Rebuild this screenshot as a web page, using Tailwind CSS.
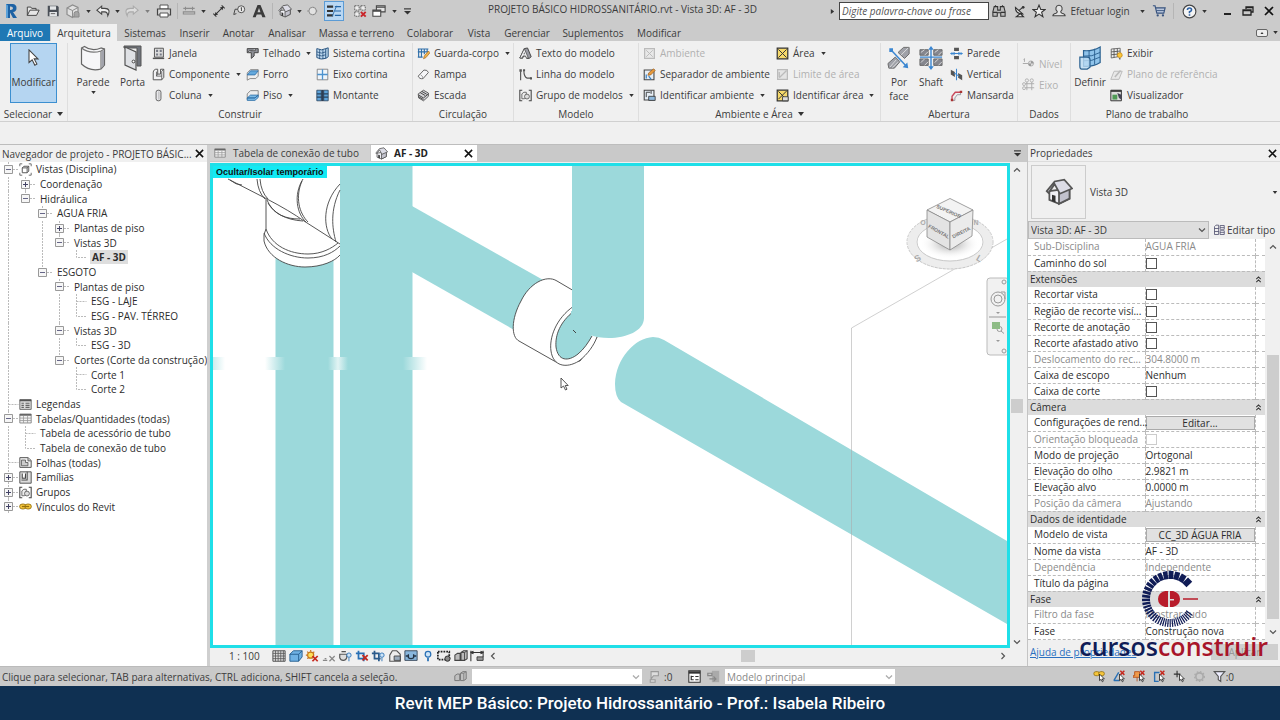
<!DOCTYPE html>
<html lang="pt-BR">
<head>
  <meta charset="utf-8" />
  <title>PROJETO BÁSICO HIDROSSANITÁRIO.rvt - Vista 3D: AF - 3D</title>
  <meta name="viewport" content="width=device-width,initial-scale=1" />
  <script src="https://cdn.jsdelivr.net/npm/@tailwindcss/browser@4"></script>
</head>

<body class="flex h-screen flex-col overflow-hidden bg-[#f0f0f0] font-['Open_Sans',sans-serif] text-[10px] leading-[14px] text-[#3c3c3c]">

<!-- ── ICONS ─────────────────────────────────────── -->
<svg class="hidden">
  <defs>
    <symbol id="i-caret" viewBox="0 0 6 4"><path d="M0 0h6L3 4z" fill="#333"/></symbol>
    <symbol id="i-x" viewBox="0 0 10 10"><path d="M1 1l8 8M9 1l-8 8" stroke="#111" stroke-width="1.700"/></symbol>
    <symbol id="i-chev" viewBox="0 0 8 8"><path d="M1 2.500L4 5.500 7 2.500" fill="none" stroke="#555" stroke-width="1.200"/></symbol>
    <symbol id="i-revit" viewBox="0 0 16 16"><path d="M3 1h6.500q4 .3 4 4T10 9l4 6H10L7 9.500V15H3zM7 3.500V7q3 .2 3-1.800T7 3.500z" fill="#1d62a4" fill-rule="evenodd"/><path d="M3 1l2 1.500V15H3z" fill="#5aa0d8"/></symbol>
    <symbol id="i-open" viewBox="0 0 16 16"><path d="M1.500 13V3.500h4l1 1.500h5v2M1.500 13l3-6h10.500l-3 6z" fill="#e6e6e6" stroke="#444" stroke-width="1.100"/></symbol>
    <symbol id="i-save" viewBox="0 0 16 16"><path d="M2 2h11l1.500 1.500V14H2z" fill="#4a4f57"/><path d="M4.500 2.500h7v4h-7zM4 9h8.500v5H4z" fill="#e4e6e8"/><path d="M5.500 11h5" stroke="#555"/></symbol>
    <symbol id="i-cloudcube" viewBox="0 0 16 16"><path d="M2 5l5.500-3L13 4.500V11l-5.500 3.500L2 11.500z" fill="#e0e0e0" stroke="#8d8d8d" stroke-width="1.200"/><path d="M2 5l5.500 2.500L13 4.500M7.500 7.500v7" stroke="#8d8d8d" fill="none"/><path d="M9 10.500q0-2 2.500-2T14 10.500V14H9z" fill="#a5a5a5" stroke="#888"/></symbol>
    <symbol id="i-undo" viewBox="0 0 16 16"><path d="M6.500 2.500L1 7l5.500 4.500V9H10q3 0 3.500 4.500Q17.500 5 10 5H6.500z" fill="#eee" stroke="#444" stroke-width="1.200"/></symbol>
    <symbol id="i-redo" viewBox="0 0 16 16"><path d="M9.500 2.500L15 7l-5.500 4.500V9H6q-3 0-3.500 4.500Q-1.500 5 6 5h3.500z" fill="#ddd" stroke="#aaa" stroke-width="1.200"/></symbol>
    <symbol id="i-print" viewBox="0 0 16 16"><path d="M4 2h8v4H4z" fill="#fff" stroke="#555"/><path d="M1.500 6h13v6h-13z" fill="#d8d8d8" stroke="#444" stroke-width="1.200"/><path d="M4 10h8v4H4z" fill="#fff" stroke="#555"/></symbol>
    <symbol id="i-measure" viewBox="0 0 16 16"><path d="M1.500 5h13M4 3v4M12 3v4M1.500 9h13v2.500h-13z" fill="none" stroke="#8c8c8c" stroke-width="1.200"/></symbol>
    <symbol id="i-dim" viewBox="0 0 16 16"><path d="M3 13L13 3M1.500 11l3.500 3.500M11 1.500L14.500 5" stroke="#333" stroke-width="1.200"/><path d="M3 13l1-4 3 3zM13 3l-1 4-3-3z" fill="#333"/></symbol>
    <symbol id="i-tag" viewBox="0 0 16 16"><circle cx="10.500" cy="6" r="4" fill="#e8e8e8" stroke="#444"/><path d="M6.500 6H3.500L2 12m0 0l3-1M10 4.500l.8-.5v4" fill="none" stroke="#444" stroke-width="1.100"/></symbol>
    <symbol id="i-A" viewBox="0 0 16 16"><path d="M6.300 1h3.400L15.500 15h-3.700L10.600 12H5.400L4.200 15H.8zM8 4.500L6.300 9.500h3.400z" fill="#3b3b3b" fill-rule="evenodd"/></symbol>
    <symbol id="i-house" viewBox="0 0 16 16"><path d="M2.500 7.500v5l5.500 2.300 6-3V6z" fill="#f0f0f5" stroke="#555"/><path d="M8 8.500l6-2.500v5.800l-6 3z" fill="#c2c2cd" stroke="#555"/><path d="M1 7.500L5.500 2l5.500-1 4.500 5L8.500 9 5.500 3.500 2 8.500z" fill="#dcdce6" stroke="#555"/><path d="M4 9.500l2 .7v3.800l-2-.9z" fill="#333"/></symbol>
    <symbol id="i-section" viewBox="0 0 16 16"><path d="M8 2l6 6-6 6z" fill="#888"/><circle cx="7.500" cy="8" r="5" fill="#e2e2e2" stroke="#888" stroke-width="1.300"/><path d="M0 8h2.500" stroke="#888"/></symbol>
    <symbol id="i-thin" viewBox="0 0 16 16"><path d="M0 3h7M0 8h7M0 13h7" stroke="#333" stroke-width="2.400"/><path d="M9 3h7M9 8h7M9 13h7" stroke="#2466a8" stroke-width="1.200"/><path d="M6 14L11 2" stroke="#2466a8"/></symbol>
    <symbol id="i-hidewin" viewBox="0 0 16 16"><path d="M2 2h5v5H2zM9 2h5v5H9zM2 9h5v5H2z" fill="#eee" stroke="#555" stroke-dasharray="2 1"/><path d="M9 9l5.500 5.500m0-5.500L9 14.500" stroke="#c9262b" stroke-width="2.200"/></symbol>
    <symbol id="i-switch" viewBox="0 0 16 16"><path d="M5 2h10v7H5z" fill="#e4e4e4" stroke="#444" stroke-width="1.200"/><path d="M1 7h9v7H1z" fill="#fff" stroke="#444" stroke-width="1.200"/><path d="M1 8h9M5 3.500h10" stroke="#444" stroke-width="1.500"/></symbol>
    <symbol id="i-custom" viewBox="0 0 8 8"><path d="M0 1h8" stroke="#333" stroke-width="1.300"/><path d="M0 3.500h8L4 7.500z" fill="#333"/></symbol>
    <symbol id="i-bino" viewBox="0 0 16 16"><path d="M2.500 3h4v4h3V3h4l1.500 6v5h-5v-4H6v4H1V9z" fill="#bbb" stroke="#333" stroke-width="1.200"/><path d="M1 9.500h5m4 0h5M4 3V1.500M12 3V1.500" stroke="#333" stroke-width="1.300"/></symbol>
    <symbol id="i-dish" viewBox="0 0 16 16"><path d="M3 3q0 8 9 8zM7 7l5-4M4 14.500h9l-4-4z" fill="#e6e6e6" stroke="#333" stroke-width="1.300"/><circle cx="12.500" cy="2.800" r="1.700" fill="#333"/></symbol>
    <symbol id="i-star" viewBox="0 0 16 16"><path d="M8 1.200l2 5h5l-4 3.200 1.500 5.200L8 11.500l-4.500 3.100L5 9.400 1 6.200h5z" fill="#eee" stroke="#333" stroke-width="1.200"/></symbol>
    <symbol id="i-user" viewBox="0 0 16 16"><path d="M8 1.500a3.500 3.800 0 0 1 2 7q0 1.500 1.500 2 3.500.8 3.500 3H1q0-2.200 3.500-3Q6 10 6 8.500a3.500 3.800 0 0 1 2-7z" fill="#e4e4e4" stroke="#444" stroke-width="1.200"/></symbol>
    <symbol id="i-cart" viewBox="0 0 16 16"><path d="M1 2h2.500l2 8.500h8L15 4.500H4.200" fill="#b9c6dc" stroke="#38537e" stroke-width="1.300"/><path d="M5 7.500h9" stroke="#38537e"/><circle cx="6.500" cy="13" r="1.300" fill="#38537e"/><circle cx="12.500" cy="13" r="1.300" fill="#38537e"/></symbol>
    <symbol id="i-help" viewBox="0 0 16 16"><circle cx="8" cy="8" r="6.800" fill="#f4f4f4" stroke="#444" stroke-width="1.200"/><path d="M5.800 6.500q0-2.200 2.200-2.200t2.200 2Q10.200 7.500 8 8.300v1.500M8 11v1.600" fill="none" stroke="#2e63a6" stroke-width="1.700"/></symbol>
    <symbol id="i-min" viewBox="0 0 12 12"><path d="M2 9h7" stroke="#222" stroke-width="2"/></symbol>
    <symbol id="i-restore" viewBox="0 0 12 12"><path d="M4 4V2h7v5H9M1 5h8v5H1zM1 5.500h8M4 2.500h7" fill="none" stroke="#222" stroke-width="1.300"/></symbol>

    <symbol id="i-cursor" viewBox="0 0 14 20"><path d="M2 1v14l3.500-3 3 6 2.300-1.200-3-5.800H12z" fill="#fff" stroke="#444" stroke-width="1.200"/></symbol>
    <symbol id="i-wall" viewBox="0 0 26 26"><path d="M1.500 3l3-1.500Q12 7 21 3l3.500 1V20l-3.500 4Q10 27 1.500 19z" fill="#f6f6f8" stroke="#666" stroke-width="1.200"/><path d="M1.500 3Q10 9.500 21 6V24M21 6l3.500-2" fill="none" stroke="#777" stroke-width="1.200"/><path d="M21.500 6.500L24 5v15l-2.500 3z" fill="#a2a3ab"/></symbol>
    <symbol id="i-door" viewBox="0 0 20 26"><path d="M1 1h17v20H14V3H1z" fill="#70747c" stroke="#555"/><path d="M2 2l11 5v18L2 20z" fill="#dfe1e5" stroke="#555" stroke-width="1.200"/><circle cx="10.500" cy="16.500" r="1.400" fill="#fff" stroke="#444"/></symbol>
    <symbol id="i-window" viewBox="0 0 16 16"><path d="M3 1.500h11v11H3z" fill="#ddd" stroke="#555" stroke-width="1.200"/><path d="M5 3.500h2.500v2.500H5zM9.500 3.500H12v2.500H9.500zM5 8h2.500v2.500H5zM9.500 8H12v2.500H9.500z" fill="#777b86"/><path d="M1 14h14" stroke="#555" stroke-width="1.800"/></symbol>
    <symbol id="i-comp" viewBox="0 0 16 16"><path d="M1.500 5q0-2.500 3-3.500H7v6h3.500v-6h4v10L12 14.500H1.500z" fill="#f3f3f5" stroke="#555" stroke-width="1.200"/><path d="M7 7.500L5.500 10V4.500M12 4v10.500M5.500 10H12M12 4l2.500-2.500" fill="none" stroke="#555"/></symbol>
    <symbol id="i-col" viewBox="0 0 16 16"><rect x="5" y="1.500" width="6" height="13" rx="2.500" fill="#e9e9ec" stroke="#666" stroke-width="1.200"/><path d="M8.500 3v10" stroke="#aaa"/></symbol>
    <symbol id="i-roof" viewBox="0 0 16 16"><path d="M1.500 2h13.500v5H10v4L6.500 14V7h-5z" fill="#8f9198" stroke="#444" stroke-width="1.200"/><path d="M1.500 7l3-2.500h7V2.500" fill="#e8e8ec" stroke="#444"/></symbol>
    <symbol id="i-ceil" viewBox="0 0 16 16"><path d="M1.500 6l4-4H15v8l-3 3H5l-3.500 2z" fill="#eee" stroke="#777"/><path d="M1.500 8.500L5.500 3.500H15L11 8.500z" fill="#64a9dd" stroke="#2e6ea6"/></symbol>
    <symbol id="i-floor" viewBox="0 0 16 16"><path d="M1.500 6l4-4H15v7l-4 4H1.500z" fill="#eee" stroke="#777"/><path d="M1.500 11L5.500 7.500H15L11 11zM1.500 11v3H11l4-3.500v-3L11 11z" fill="#7dbbe6" stroke="#2e6ea6"/></symbol>
    <symbol id="i-curtsys" viewBox="0 0 16 16"><path d="M1 2q6 3 11 0v12Q6 16 1 13zM12 2l3-1v11l-3 2" fill="#bfdaf0" stroke="#27537f" stroke-width="1.200"/><path d="M4.500 3v12M8.500 3v12M1 6q6 3 11 0M1 9.500q6 3 11 0" fill="none" stroke="#27537f"/></symbol>
    <symbol id="i-grid4" viewBox="0 0 16 16"><path d="M1.500 1.500h13v13h-13z" fill="#eef5fb" stroke="#777"/><path d="M8 1.500v13M1.500 8h13" stroke="#4d93cf" stroke-width="1.600"/></symbol>
    <symbol id="i-mullion" viewBox="0 0 16 16"><path d="M1 1.500h5.500v13H1zM9.500 1.500H15v13H9.500z" fill="#5ea3da" stroke="#27445f"/><path d="M1 6h14M1 10h14" stroke="#27445f" stroke-width="1.600"/><path d="M6.500 1h3v14h-3z" fill="#2c3e55"/></symbol>
    <symbol id="i-rail" viewBox="0 0 16 16"><path d="M1 2.500h13M1 6h13M2 2v11M5.500 2v11M9 2v7M12.500 2v4M1 12.500h6" stroke="#2f6fa9" stroke-width="1.400"/><path d="M8 14.500l1-3.500L14 5l2 2-5 6z" fill="#f0b44a" stroke="#a3611b" stroke-width=".8"/></symbol>
    <symbol id="i-ramp" viewBox="0 0 16 16"><path d="M1.500 10L8.500 2.500Q13 2 14 5.500L7.500 13Q3 14 1.500 10z" fill="#f6f6f8" stroke="#666" stroke-width="1.200"/><path d="M7.500 13q0-3-3-4.500" fill="none" stroke="#888"/></symbol>
    <symbol id="i-stair" viewBox="0 0 16 16"><path d="M1.500 6L8 1.500l6 3.500v4l-6 5.500L2 11z" fill="#d5d5d9" stroke="#444"/><path d="M2 7.500l6 3.500 6-5M2 9.500L8 13M4 4.500l6 3.500M6 3l6 3.500" fill="none" stroke="#444" stroke-width="1.200"/></symbol>
    <symbol id="i-mtext" viewBox="0 0 16 16"><path d="M1 13.500L6.500 2l4-.8L15 12l-2.500 2H9.500L8.700 11H5.500l-1 2.800z" fill="#9a9ba3" stroke="#444" stroke-width="1.200"/><path d="M1 13.500L6.500 2l5 11.500H9L8 11H5l-1 2.500z" fill="#f2f2f4" stroke="#555"/><path d="M6.500 6L5.500 9h2z" fill="#666"/></symbol>
    <symbol id="i-mline" viewBox="0 0 16 16"><path d="M2 4v11M6 3q0 8 4 9.500h5" fill="none" stroke="#555" stroke-width="1.400"/><path d="M.5 1.500h3v3h-3zM5 1.500h2.500v2.500H5zM13.500 11.500H16V14h-2.500z" fill="#555"/></symbol>
    <symbol id="i-mgroup" viewBox="0 0 16 16"><path d="M4 1.500H1v13h3M12 1.500h3v13h-3" fill="none" stroke="#444" stroke-width="1.300"/><path d="M3.500 6l2.500-2h3v6L6.500 12h-3z" fill="#eee" stroke="#555"/><circle cx="9.800" cy="9.300" r="3" fill="#ddd" stroke="#555"/></symbol>
    <symbol id="i-room0" viewBox="0 0 16 16"><path d="M2 2h12v12H2z" fill="#e8e8e8" stroke="#bbb" stroke-width="1.500"/><path d="M4 4l8 8M12 4l-8 8" stroke="#bbb" stroke-width="1.200"/></symbol>
    <symbol id="i-roomsep" viewBox="0 0 16 16"><path d="M1.500 2.500h12v12h-12z" fill="#e6eef6" stroke="#444" stroke-width="1.300"/><path d="M4 8v5M7 10l3 4" stroke="#3a82c3" stroke-width="1.500"/><path d="M6 9l1-3L13 1l2 2-5.500 5.500z" fill="#e89b3c" stroke="#95561b" stroke-width=".8"/></symbol>
    <symbol id="i-roomtag" viewBox="0 0 16 16"><path d="M1.500 1.500h12v12h-12z" fill="#e6eef6" stroke="#444" stroke-width="1.300"/><path d="M4 4v6M4 4h5M10 2v4" stroke="#444" stroke-width="1.200"/><path d="M7 9h8v5H7z" fill="#8fb9dd" stroke="#333"/></symbol>
    <symbol id="i-area" viewBox="0 0 16 16"><path d="M1.500 1.500h13v13h-13z" fill="#f6d96a" stroke="#333" stroke-width="1.500"/><path d="M3 3l10 10M13 3L3 13" stroke="#333" stroke-width="1.200"/></symbol>
    <symbol id="i-areatag" viewBox="0 0 16 16"><path d="M1.500 1.500h13v13h-13z" fill="#f6d96a" stroke="#333" stroke-width="1.500"/><path d="M3 3l8 8M13 2.500L3 12.500" stroke="#333" stroke-width="1.200"/><path d="M8 9.500h7v5H8z" fill="#ddd" stroke="#333"/></symbol>
    <symbol id="i-area0" viewBox="0 0 16 16"><path d="M2 2h12v12H2z" fill="#e4e4e4" stroke="#bbb" stroke-width="1.500"/><path d="M4 12l9-9M4 5v6" stroke="#bbb" stroke-width="1.600"/></symbol>
    <symbol id="i-byface" viewBox="0 0 26 26"><path d="M12 7l6-5.500h6v7l-5 5zM1 19l8-7 5 5-6 7H2z" fill="#9fa1a8" stroke="#666"/><path d="M3 23l7-8M15 10l8-8M6 23.500l6-6" stroke="#ddd"/><path d="M5 5l16 17" stroke="#3a86d1" stroke-width="1.600"/><path d="M2.500 2.500h4v4h-4zM23 24l-1-6-5 5z" fill="#3a86d1"/></symbol>
    <symbol id="i-shaft" viewBox="0 0 26 26"><path d="M1 4h9v6H1zM16 4h9v6h-9zM1 14h9v7H1zM16 14h9v7h-9z" fill="#85878f" stroke="#666"/><path d="M2 7l4-3m0 6l4-4m7 1l4-3m0 6l4-4M2 18l4-4m0 7l4-4m7 1l4-4m0 7l4-4" stroke="#ddd"/><path d="M1 12h24M13 2v22" stroke="#3a86d1" stroke-width="1.500"/><path d="M13 0l3 4h-6zM13 26l3-4h-6z" fill="#3a86d1"/></symbol>
    <symbol id="i-owall" viewBox="0 0 16 16"><path d="M5 1h6v4H5zM5 11h6v4H5z" fill="#555"/><path d="M1 8h14M5 6v4M11 6v4" stroke="#3a86d1" stroke-width="1.300"/><path d="M0 8l3-2v4zM16 8l-3-2v4z" fill="#3a86d1"/></symbol>
    <symbol id="i-overt" viewBox="0 0 16 16"><path d="M1 2l5 3v6L1 8zM10 6l5 3v6l-5-3z" fill="#555"/><path d="M8 1v14M5 6l6 4" stroke="#3a86d1" stroke-width="1.300"/></symbol>
    <symbol id="i-dormer" viewBox="0 0 16 16"><path d="M2.500 14V9l4-5h7" fill="none" stroke="#c8485a" stroke-width="1.700"/><path d="M13 4v3h-4l-3 4v3H3" fill="none" stroke="#8a8a92"/><path d="M12 2h3v3h-3zM1 12h3v3H1z" fill="#a33"/></symbol>
    <symbol id="i-level" viewBox="0 0 16 16"><path d="M1 8h7M3 2v4M2 3l1-1" stroke="#aaa" stroke-width="1.200"/><circle cx="11" cy="8" r="3.200" fill="#ddd" stroke="#aaa"/><path d="M11 8V4.800A3.200 3.200 0 0 1 14.200 8zM11 8v3.200A3.200 3.200 0 0 1 7.800 8z" fill="#999"/></symbol>
    <symbol id="i-axis" viewBox="0 0 16 16"><path d="M6 5v10M12 5v10M4 7h11M4 12h11" stroke="#aaa" stroke-width="1.100"/><g fill="#eee" stroke="#aaa"><circle cx="6" cy="3" r="2"/><circle cx="12" cy="3" r="2"/><circle cx="2.500" cy="7.500" r="1.800"/><circle cx="2.500" cy="12.500" r="1.800"/></g></symbol>
    <symbol id="i-plane" viewBox="0 0 26 26"><path d="M6 5q9 1 18-4v17q-8 5-18 4z" fill="#8fc3ea" stroke="#2b6190" stroke-width="1.300"/><path d="M12 5v17M18 3v17M6 11q9 1 18-4M6 16q9 1 18-4" fill="none" stroke="#2b6190"/><path d="M2 12h8q3 0 3 3v8l-3 2H4q-2 0-2-3z" fill="#bcdcf4" fill-opacity=".8" stroke="#2b6190" stroke-width="1.300"/></symbol>
    <symbol id="i-show" viewBox="0 0 16 16"><path d="M1.500 2.500l11-1v10l-11 2z" fill="#eee" stroke="#555"/><path d="M5 2v11M9 2v10M1.500 6l11-1M1.500 9.500l11-1" stroke="#555" stroke-width="1.100"/><circle cx="12" cy="10" r="3" fill="#fbc73a" stroke="#c98a15"/><path d="M11 14.500h2" stroke="#555" stroke-width="1.500"/></symbol>
    <symbol id="i-refpl" viewBox="0 0 16 16"><path d="M1 14L5 4h10l-4 10z" fill="#e8e8e8" stroke="#bbb" stroke-width="1.200"/><path d="M6 11l7-8" stroke="#bbb" stroke-width="2"/></symbol>
    <symbol id="i-viewer" viewBox="0 0 16 16"><path d="M1 1.500h13v13H1z" fill="#ddd" stroke="#333" stroke-width="1.200"/><path d="M1 2.500h13" stroke="#333" stroke-width="2"/><path d="M3 7h6v6H3z" fill="#4f9a56"/><path d="M9 5l5 2v6l-3-2z" fill="#445"/></symbol>

    <symbol id="i-views" viewBox="0 0 16 16"><path d="M1 4V1h3M12 1h3v3M15 12v3h-3M4 15H1v-3" fill="none" stroke="#555"/><path d="M4 6l2-2h6v6l-2 2H4zM4 6h6v6M10 6l2-2" fill="#fff" stroke="#555" stroke-width="1.200"/></symbol>
    <symbol id="i-legend" viewBox="0 0 16 16"><path d="M1 2h14v12H1z" fill="#ddd" stroke="#555"/><path d="M1 3h14" stroke="#555" stroke-width="2"/><path d="M3 6.500h3m2 0h5M3 9h3m2 0h5M3 11.500h3m2 0h5" stroke="#666" stroke-width="1.400"/></symbol>
    <symbol id="i-sched" viewBox="0 0 16 16"><path d="M1 2.500h14v11H1z" fill="#f3f3f3" stroke="#777"/><path d="M1 3.500h14" stroke="#666" stroke-width="2.200"/><path d="M1 7.500h14M1 10.500h14M5.500 5v8.500M10.500 5v8.500" stroke="#999"/></symbol>
    <symbol id="i-sheet" viewBox="0 0 16 16"><path d="M1 2h10l4 3.500V14H1z" fill="#eee" stroke="#555" stroke-width="1.200"/><path d="M3 5h5v3h3v4H3zM11 2v4h4" fill="#ccc" stroke="#555"/></symbol>
    <symbol id="i-fam" viewBox="0 0 16 16"><path d="M1 1h14v14H1z" fill="#ddd" stroke="#555" stroke-width="1.200"/><path d="M4 3v6h4V3m2-2v10H3" fill="#fff" stroke="#444" stroke-width="1.300"/></symbol>
    <symbol id="i-link" viewBox="0 0 16 16"><g fill="#f6c63c" stroke="#94700d" stroke-width="1.100"><rect x=".8" y="5" width="8" height="6" rx="3"/><rect x="7.200" y="5" width="8" height="6" rx="3"/></g><path d="M3.500 8h9" stroke="#94700d" stroke-width="1.600"/></symbol>
    <symbol id="i-edittype" viewBox="0 0 16 16"><path d="M2 3.500l2-2h3.500V14H2zM2 6h5.500M2 10h5.500" fill="#eee" stroke="#446"/><path d="M9.500 2H15v5H9.500zM9.500 9H15v5H9.500zM9.500 4.500H15M9.500 11.500H15" fill="#fff" stroke="#446"/></symbol>
    <symbol id="i-up2" viewBox="0 0 8 8"><path d="M1.500 3.500L4 1l2.500 2.500M1.500 7L4 4.500 6.500 7" fill="none" stroke="#333" stroke-width="1.200"/></symbol>

    <symbol id="v-detail" viewBox="0 0 16 16"><path d="M1 2h14v12H1z" fill="#ddd" stroke="#444"/><path d="M1 5h14M1 8h14M1 11h14M4 2v12M7 2v12M10 2v12M13 2v12" stroke="#555" stroke-width=".9"/></symbol>
    <symbol id="v-style" viewBox="0 0 16 16"><path d="M1 6l4-4h10v7l-4 5H1z" fill="#6fb2e4" stroke="#215a8c"/><path d="M1 6h10v8M11 6l4-4" fill="none" stroke="#215a8c"/></symbol>
    <symbol id="v-sun" viewBox="0 0 16 16"><circle cx="6.500" cy="7" r="3.500" fill="#fce05a" stroke="#c7761a" stroke-width="1.300"/><path d="M6.500 1v2M1 7h2M2.500 3l1.500 1.500M10.500 3L9.500 4.500M2.500 11L4 10" stroke="#c7761a" stroke-width="1.300"/><path d="M8.500 8l6 6m0-6l-6 6" stroke="#c6281e" stroke-width="2"/></symbol>
    <symbol id="v-shadow" viewBox="0 0 16 16"><path d="M1 13h5M3 11h2" stroke="#888" stroke-width="1.500"/><path d="M8.500 8l6 6m0-6l-6 6" stroke="#888" stroke-width="1.400"/></symbol>
    <symbol id="v-render" viewBox="0 0 16 16"><path d="M2 6h8v4q-1 3-4 3t-4-3zM10 7h2" fill="#ddd" stroke="#555" stroke-width="1.300"/><path d="M4 3h5" stroke="#555" stroke-width="1.500"/><circle cx="12.500" cy="7" r="2.500" fill="#cde4f7" stroke="#2970b5"/><path d="M12.500 10v4" stroke="#2970b5"/></symbol>
    <symbol id="v-crop" viewBox="0 0 16 16"><path d="M1 5h9v9M4 2v9h9" fill="none" stroke="#2970b5" stroke-width="2"/><path d="M8.500 7l6 6m0-6l-6 6" stroke="#c6281e" stroke-width="2"/></symbol>
    <symbol id="v-cropshow" viewBox="0 0 16 16"><path d="M1 5h8v9M4 2v9h7" fill="none" stroke="#2b5b8b" stroke-width="2"/><circle cx="12.500" cy="7" r="2.500" fill="#cde4f7" stroke="#2970b5"/><path d="M12.500 10v4" stroke="#2970b5"/></symbol>
    <symbol id="v-lock" viewBox="0 0 16 16"><path d="M2 7l3-5h5l4 4v8H2z" fill="#eee" stroke="#555" stroke-width="1.300"/><path d="M7 8h7v5H7z" fill="#9ab" stroke="#444"/></symbol>
    <symbol id="v-hide" viewBox="0 0 16 16"><path d="M1 2h14v11H1z" fill="#89b7dd" stroke="#345"/><path d="M2 8h3m6 0h3M5 6v4q3 2 6 0V6" fill="none" stroke="#234" stroke-width="1.500"/></symbol>
    <symbol id="v-bulb" viewBox="0 0 16 16"><circle cx="8" cy="6" r="3.200" fill="#cde4f7" stroke="#2970b5" stroke-width="1.400"/><path d="M8 10v4" stroke="#2970b5" stroke-width="2"/></symbol>
    <symbol id="v-prop" viewBox="0 0 16 16"><path d="M1 3h13v9H1z" fill="#eee" stroke="#222" stroke-width="2" stroke-dasharray="2 1.200"/><circle cx="12" cy="11" r="3" fill="#888" stroke="#222"/></symbol>
    <symbol id="v-blocks" viewBox="0 0 16 16"><path d="M1 7l3-2h3v8H1zM8 4l3-2h4v9l-3 2H8z" fill="#bbb" stroke="#444" stroke-width="1.200"/><path d="M8 4h4v9M12 4l3-2" fill="none" stroke="#444"/></symbol>
    <symbol id="v-constr" viewBox="0 0 16 16"><path d="M1 2v12M15 2v7M1 4h14M4 2.500L1 4l3 1.500M12 2.500L15 4l-3 1.500" fill="none" stroke="#333" stroke-width="1.200"/><path d="M8 9h7v4H8z" fill="#999" stroke="#333"/></symbol>
    <symbol id="s-filter" viewBox="0 0 16 16"><path d="M1.500 2h13L9.500 8v6l-3-2V8z" fill="#eef" stroke="#555" stroke-width="1.400"/></symbol>
    <symbol id="s-gear" viewBox="0 0 16 16"><circle cx="8" cy="8" r="4.500" fill="none" stroke="#aaa" stroke-width="2"/><circle cx="8" cy="8" r="6" fill="none" stroke="#aaa" stroke-width="1.500" stroke-dasharray="2 2"/></symbol>
    <symbol id="s-arrow" viewBox="0 0 16 16"><path d="M8 5v8l2-1.500 1.500 3 1.300-.8-1.500-2.700H14z" fill="#fff" stroke="#222"/></symbol>
    <symbol id="s-links" viewBox="0 0 16 16"><rect x="1" y="2" width="7" height="5" rx="2.500" fill="#f6c63c" stroke="#94700d"/><rect x="7" y="2" width="7" height="5" rx="2.500" fill="#f6c63c" stroke="#94700d"/><use href="#s-arrow"/></symbol>
    <symbol id="s-under" viewBox="0 0 16 16"><path d="M1 13L7 3M1 13h7" stroke="#2970b5" stroke-width="1.700"/><path d="M9 1l5 5m0-5L9 6" stroke="#c6281e" stroke-width="1.800"/><use href="#s-arrow"/></symbol>
    <symbol id="s-pin" viewBox="0 0 16 16"><path d="M2 2h6v5h2v2H0V7h2zM5 9v5" fill="#ef9a4a" stroke="#b34a12"/><path d="M9 1l5 5m0-5L9 6" stroke="#c6281e" stroke-width="1.800"/><use href="#s-arrow"/></symbol>
    <symbol id="s-face" viewBox="0 0 16 16"><path d="M8 3H2v11h5" fill="none" stroke="#2970b5" stroke-width="1.700"/><path d="M9 1l5 5m0-5L9 6" stroke="#c6281e" stroke-width="1.800"/><use href="#s-arrow"/></symbol>
    <symbol id="s-drag" viewBox="0 0 16 16"><path d="M5 1v8M1 5h8" stroke="#333" stroke-width="1.400"/><use href="#s-arrow"/></symbol>
    <symbol id="s-edit" viewBox="0 0 16 16"><path d="M5 2h9v5H8l-3 4zM4 12h6v3H4z" fill="#ddd" stroke="#999" stroke-width="1.300"/></symbol>
    <symbol id="s-opt" viewBox="0 0 16 16"><path d="M1 1h14v14H1z" fill="#fff" stroke="#333" stroke-width="1.300"/><path d="M1 3h14" stroke="#333" stroke-width="3"/><path d="M4 7v5h3M4 8h3M9 8h4M9 12h4" fill="none" stroke="#333" stroke-width="1.500"/></symbol>
    <symbol id="s-opt2" viewBox="0 0 16 16"><path d="M6 1h9v14H6z" fill="#aaa"/><path d="M1 4h5v3H1zM3 11h8m-3-3l3 3-3 3" fill="none" stroke="#888" stroke-width="1.500"/></symbol>
  </defs>
</svg>

<!-- ── TITLE BAR ─────────────────────────────────── -->
<header class="flex h-6 shrink-0 items-center bg-[#cbcbcb] pb-[2px]">
  <div class="flex w-[415px] shrink-0 items-center [&>button]:flex [&>button]:h-5 [&>button]:items-center [&>button]:justify-center">
    <button class="w-[22px]" aria-label="Revit"><svg class="size-4"><use href="#i-revit"/></svg></button>
    <button class="w-[22px]" aria-label="Abrir"><svg class="size-[14px]"><use href="#i-open"/></svg></button>
    <button class="w-5" aria-label="Salvar"><svg class="size-[14px]"><use href="#i-save"/></svg></button>
    <button class="w-5" aria-label="Sincronizar"><svg class="size-4"><use href="#i-cloudcube"/></svg></button>
    <button class="w-3" aria-label="Opções de sincronizar"><svg class="h-[3px] w-[5px]"><use href="#i-caret"/></svg></button>
    <button class="w-4" aria-label="Desfazer"><svg class="size-[14px]"><use href="#i-undo"/></svg></button>
    <button class="w-[14px]" aria-label="Lista desfazer"><svg class="h-[3px] w-[5px]"><use href="#i-caret"/></svg></button>
    <button class="w-4" aria-label="Refazer"><svg class="size-[14px]"><use href="#i-redo"/></svg></button>
    <button class="w-[14px]" aria-label="Lista refazer"><svg class="h-[3px] w-[5px] opacity-50"><use href="#i-caret"/></svg></button>
    <button class="w-5" aria-label="Imprimir"><svg class="size-4"><use href="#i-print"/></svg></button>
    <span class="ml-[3px] mr-[2px] h-4 w-px bg-[#b5b5b5]"></span>
    <button class="w-[18px]" aria-label="Medir"><svg class="size-[14px]"><use href="#i-measure"/></svg></button>
    <button class="w-3" aria-label="Opções de medir"><svg class="h-[3px] w-[5px]"><use href="#i-caret"/></svg></button>
    <button class="w-5" aria-label="Cota alinhada"><svg class="size-[14px]"><use href="#i-dim"/></svg></button>
    <button class="w-5" aria-label="Identificador"><svg class="size-[14px]"><use href="#i-tag"/></svg></button>
    <button class="w-5" aria-label="Texto"><svg class="size-[14px]"><use href="#i-A"/></svg></button>
    <span class="mx-[3px] h-4 w-px bg-[#b5b5b5]"></span>
    <button class="w-[18px]" aria-label="Vista 3D padrão"><svg class="size-[14px]"><use href="#i-house"/></svg></button>
    <button class="w-3" aria-label="Opções de vista 3D"><svg class="h-[3px] w-[5px]"><use href="#i-caret"/></svg></button>
    <button class="w-4" aria-label="Corte"><svg class="size-3"><use href="#i-section"/></svg></button>
    <button class="ml-[3px] w-5 border border-[#5b9bd5] bg-[#b9d7f3]" aria-label="Linhas finas"><svg class="size-[14px]"><use href="#i-thin"/></svg></button>
    <button class="ml-[6px] w-5" aria-label="Fechar ocultas"><svg class="size-[14px]"><use href="#i-hidewin"/></svg></button>
    <button class="w-5" aria-label="Alternar janelas"><svg class="size-[14px]"><use href="#i-switch"/></svg></button>
    <button class="w-[10px]" aria-label="Lista de janelas"><svg class="h-[3px] w-[5px]"><use href="#i-caret"/></svg></button>
    <button class="w-4" aria-label="Personalizar"><svg class="size-[7px]"><use href="#i-custom"/></svg></button>
  </div>
  <h1 class="flex-1 truncate pb-[5px] text-center">PROJETO BÁSICO HIDROSSANITÁRIO.rvt - Vista 3D: AF - 3D</h1>
  <div class="flex shrink-0 items-center [&>button]:flex [&>button]:h-5 [&>button]:items-center [&>button]:justify-center">
    <svg class="mr-1 size-[5px] -rotate-90"><use href="#i-caret"/></svg>
    <input type="search" aria-label="Pesquisar" placeholder="Digite palavra-chave ou frase" class="h-[18px] w-[150px] border border-[#444] bg-white px-[2px] italic placeholder:text-[#555]" />
    <button class="w-5" aria-label="Buscar"><svg class="size-[14px]"><use href="#i-bino"/></svg></button>
    <button class="w-5" aria-label="Centro de comunicação"><svg class="size-[13px]"><use href="#i-dish"/></svg></button>
    <button class="w-5" aria-label="Favoritos"><svg class="size-[14px]"><use href="#i-star"/></svg></button>
    <button class="w-[84px] gap-1 whitespace-nowrap"><svg class="size-[14px]"><use href="#i-user"/></svg>Efetuar login</button>
    <button class="w-[18px]" aria-label="Menu de login"><svg class="h-[3px] w-[5px]"><use href="#i-caret"/></svg></button>
    <button class="w-4" aria-label="Loja"><svg class="size-[14px]"><use href="#i-cart"/></svg></button>
    <span class="mx-[6px] h-4 w-px bg-[#b5b5b5]"></span>
    <button class="w-[18px]" aria-label="Ajuda"><svg class="size-[15px]"><use href="#i-help"/></svg></button>
    <button class="w-3" aria-label="Menu de ajuda"><svg class="h-[3px] w-[5px]"><use href="#i-caret"/></svg></button>
    <button class="ml-2 w-5" aria-label="Minimizar"><svg class="size-3"><use href="#i-min"/></svg></button>
    <button class="w-5" aria-label="Restaurar"><svg class="size-3"><use href="#i-restore"/></svg></button>
    <button class="w-[22px]" aria-label="Fechar"><svg class="size-[10px]"><use href="#i-x"/></svg></button>
  </div>
</header>

<!-- ── RIBBON TABS ───────────────────────────────── -->
<nav class="flex h-[17px] shrink-0 items-center bg-[#cbcbcb] [&>button]:h-full [&>button]:shrink-0 [&>button]:whitespace-nowrap">
  <button class="w-[50px] bg-[#1f78b4] text-white">Arquivo</button>
  <button class="ml-px w-[66px] bg-[#f0f0f0]">Arquitetura</button>
  <button class="w-[56px]">Sistemas</button>
  <button class="w-[43px]">Inserir</button>
  <button class="w-[45px]">Anotar</button>
  <button class="w-[52px]">Analisar</button>
  <button class="w-[87px]">Massa e terreno</button>
  <button class="w-[60px]">Colaborar</button>
  <button class="w-[38px]">Vista</button>
  <button class="w-[58px]">Gerenciar</button>
  <button class="w-[74px]">Suplementos</button>
  <button class="w-[58px]">Modificar</button>
  <button class="ml-auto mr-[2px] flex items-center gap-[5px]" aria-label="Minimizar faixa">
    <span class="flex h-2 w-3 items-center justify-center rounded-xs border border-[#666] bg-[#eee]"><svg class="h-[2px] w-1 rotate-180"><use href="#i-caret"/></svg></span>
    <svg class="h-[3px] w-[5px]"><use href="#i-caret"/></svg>
  </button>
</nav>

<!-- ── RIBBON ────────────────────────────────────── -->
<div id="ribbon" class="flex h-[81px] shrink-0 border-b border-[#d0d0d0] bg-[#f0f0f0] pt-[2px]
  [&>section]:flex [&>section]:shrink-0 [&>section]:flex-col [&>section]:border-r [&>section]:border-[#dedede]
  [&>section>div]:flex [&>section>div]:h-16
  [&>section>h2]:flex [&>section>h2]:items-center [&>section>h2]:justify-center [&>section>h2]:gap-[5px]
  [&_ul]:shrink-0 [&_li]:h-[21px] [&_li>button]:flex [&_li>button]:h-5 [&_li>button]:items-center [&_li>button]:gap-1 [&_li>button]:whitespace-nowrap
  [&_li>button>svg:first-child]:size-[13px] [&_li_i]:ml-[2px]">
  <section class="w-[68px]">
    <div class="px-[10px]">
      <button class="flex h-[60px] w-12 flex-col items-center border border-[#3c8fd0] bg-[#b5d5f1]">
        <svg class="mt-[5px] h-[18px] w-[13px]"><use href="#i-cursor"/></svg>
        <span class="mt-2">Modificar</span>
      </button>
    </div>
    <h2>Selecionar<svg class="h-[4px] w-[6px]"><use href="#i-caret"/></svg></h2>
  </section>
  <section class="w-[345px]">
    <div class="pl-[5px]">
      <button class="flex w-10 flex-col items-center pt-[2px]"><svg class="size-[26px]"><use href="#i-wall"/></svg><span class="mt-1">Parede</span><svg class="mt-[2px] h-[3px] w-[5px]"><use href="#i-caret"/></svg></button>
      <button class="flex w-[39px] flex-col items-center pt-[2px]"><svg class="h-[26px] w-5"><use href="#i-door"/></svg><span class="mt-1">Porta</span></button>
      <ul class="w-[94px]">
        <li><button><svg><use href="#i-window"/></svg>Janela</button></li>
        <li><button><svg><use href="#i-comp"/></svg>Componente<i><svg class="h-[3px] w-[5px]"><use href="#i-caret"/></svg></i></button></li>
        <li><button><svg><use href="#i-col"/></svg>Coluna<i><svg class="h-[3px] w-[5px]"><use href="#i-caret"/></svg></i></button></li>
      </ul>
      <ul class="w-[70px]">
        <li><button><svg><use href="#i-roof"/></svg>Telhado<i><svg class="h-[3px] w-[5px]"><use href="#i-caret"/></svg></i></button></li>
        <li><button><svg><use href="#i-ceil"/></svg>Forro</button></li>
        <li><button><svg><use href="#i-floor"/></svg>Piso<i><svg class="h-[3px] w-[5px]"><use href="#i-caret"/></svg></i></button></li>
      </ul>
      <ul class="w-[94px]">
        <li><button><svg><use href="#i-curtsys"/></svg>Sistema cortina</button></li>
        <li><button><svg><use href="#i-grid4"/></svg>Eixo cortina</button></li>
        <li><button><svg><use href="#i-mullion"/></svg>Montante</button></li>
      </ul>
    </div>
    <h2>Construir</h2>
  </section>
  <section class="w-[101px]">
    <div class="pl-1">
      <ul>
        <li><button><svg><use href="#i-rail"/></svg>Guarda-corpo<i><svg class="h-[3px] w-[5px]"><use href="#i-caret"/></svg></i></button></li>
        <li><button><svg><use href="#i-ramp"/></svg>Rampa</button></li>
        <li><button><svg><use href="#i-stair"/></svg>Escada</button></li>
      </ul>
    </div>
    <h2>Circulação</h2>
  </section>
  <section class="w-[125px]">
    <div class="pl-[5px]">
      <ul>
        <li><button><svg><use href="#i-mtext"/></svg>Texto do modelo</button></li>
        <li><button><svg><use href="#i-mline"/></svg>Linha do modelo</button></li>
        <li><button><svg><use href="#i-mgroup"/></svg>Grupo de modelos<i><svg class="h-[3px] w-[5px]"><use href="#i-caret"/></svg></i></button></li>
      </ul>
    </div>
    <h2>Modelo</h2>
  </section>
  <section class="w-[242px]">
    <div class="pl-1">
      <ul class="w-[133px]">
        <li><button disabled class="text-[#b0b0b0]"><svg><use href="#i-room0"/></svg>Ambiente</button></li>
        <li><button><svg><use href="#i-roomsep"/></svg>Separador de ambiente</button></li>
        <li><button><svg><use href="#i-roomtag"/></svg>Identificar ambiente<i><svg class="h-[3px] w-[5px]"><use href="#i-caret"/></svg></i></button></li>
      </ul>
      <ul>
        <li><button><svg><use href="#i-area"/></svg>Área<i><svg class="h-[3px] w-[5px]"><use href="#i-caret"/></svg></i></button></li>
        <li><button disabled class="text-[#b0b0b0]"><svg><use href="#i-area0"/></svg>Limite de área</button></li>
        <li><button><svg><use href="#i-areatag"/></svg>Identificar área<i><svg class="h-[3px] w-[5px]"><use href="#i-caret"/></svg></i></button></li>
      </ul>
    </div>
    <h2>Ambiente e Área<svg class="h-[4px] w-[6px]"><use href="#i-caret"/></svg></h2>
  </section>
  <section class="w-[137px]">
    <div class="pl-1">
      <button class="flex w-7 flex-col items-center pt-[3px]"><svg class="size-6"><use href="#i-byface"/></svg><span class="mt-[5px]">Por<br />face</span></button>
      <button class="ml-[2px] flex w-8 flex-col items-center pt-[3px]"><svg class="size-6"><use href="#i-shaft"/></svg><span class="mt-[5px]">Shaft</span></button>
      <ul class="ml-[3px]">
        <li><button><svg><use href="#i-owall"/></svg>Parede</button></li>
        <li><button><svg><use href="#i-overt"/></svg>Vertical</button></li>
        <li><button><svg><use href="#i-dormer"/></svg>Mansarda</button></li>
      </ul>
    </div>
    <h2>Abertura</h2>
  </section>
  <section class="w-[53px]">
    <div class="items-center pb-[1px] pl-1">
      <ul>
        <li><button disabled class="text-[#b0b0b0]"><svg><use href="#i-level"/></svg>Nível</button></li>
        <li><button disabled class="text-[#b0b0b0]"><svg><use href="#i-axis"/></svg>Eixo</button></li>
      </ul>
    </div>
    <h2>Dados</h2>
  </section>
  <section class="w-[152px] border-r-0!">
    <div class="pl-[3px]">
      <button class="flex w-8 flex-col items-center pt-[3px]"><svg class="size-6"><use href="#i-plane"/></svg><span class="mt-[5px]">Definir</span></button>
      <ul class="ml-1">
        <li><button><svg><use href="#i-show"/></svg>Exibir</button></li>
        <li><button disabled class="text-[#b0b0b0]"><svg><use href="#i-refpl"/></svg>Plano de referência</button></li>
        <li><button><svg><use href="#i-viewer"/></svg>Visualizador</button></li>
      </ul>
    </div>
    <h2>Plano de trabalho</h2>
  </section>
</div>

<!-- ── WORKSPACE ─────────────────────────────────── -->
<div class="mt-[22px] flex min-h-0 flex-1 border-t border-[#bdbdbd]">

  <!-- Project browser -->
  <aside class="flex w-[207px] shrink-0 flex-col bg-white">
    <header class="flex h-[17px] shrink-0 items-center justify-between bg-[#f0f0f0] pl-[2px] pr-[3px]">
      <h2 class="truncate">Navegador de projeto - PROJETO BÁSIC...</h2>
      <button aria-label="Fechar navegador"><svg class="size-[9px]"><use href="#i-x"/></svg></button>
    </header>
    <ul id="tree" class="flex h-[352px] flex-col text-[#2c2c2c]"></ul>
  </aside>

  <!-- Drawing area -->
  <main class="flex min-w-0 flex-1 flex-col border-l-3 border-[#cfcfcf] bg-[#f0f0f0]">
    <div class="flex h-[17px] shrink-0 items-center bg-[#c9c9c9] pb-px">
      <button class="flex h-full w-40 items-center gap-[7px] bg-[#d2d2d2] pl-1"><svg class="size-3"><use href="#i-sched"/></svg>Tabela de conexão de tubo</button>
      <div class="ml-px flex h-full w-[106px] items-center bg-white pl-1 pr-1">
        <svg class="size-[13px]"><use href="#i-house"/></svg><button class="ml-[6px] font-bold text-[#222]">AF - 3D</button>
        <button class="ml-auto" aria-label="Fechar vista"><svg class="size-[9px]"><use href="#i-x"/></svg></button>
      </div>
      <button class="ml-auto mr-[6px]" aria-label="Lista de vistas"><svg class="size-[7px]"><use href="#i-custom"/></svg></button>
    </div>
    <div class="flex min-h-0 flex-1">
      <div class="relative mt-px min-w-0 flex-1 border-3 border-[#1fdfe8] bg-white">
        <svg class="absolute size-full" viewBox="213 166 794 490" preserveAspectRatio="xMinYMin slice">
          <defs>
            <linearGradient id="fadeIn"><stop offset="0" stop-color="#fff"/><stop offset="1" stop-color="#9cd9db"/></linearGradient>
            <linearGradient id="fadeOut"><stop offset="0" stop-color="#9cd9db"/><stop offset="1" stop-color="#fff"/></linearGradient>
            <linearGradient id="gap"><stop offset="0" stop-color="#9cd9db"/><stop offset=".5" stop-color="#e2f4f4"/><stop offset="1" stop-color="#9cd9db"/></linearGradient>
            <radialGradient id="cubeShade"><stop offset="0" stop-color="#999"/><stop offset="1" stop-color="#fff" stop-opacity="0"/></radialGradient>
          </defs>
          <g fill="#9cd9db">
            <path d="M275.500 240h58v416h-58zM340 166h72.500v490h-72.500z"/>
            <path d="M412 206L545 281 516 331 412 272z"/>
            <path d="M664 340L1007 541V624L621 402Q615 397 615 384C616 358 635 338 653 337Q659 337 664 340z"/>
          </g>
          <!-- elbow fitting -->
          <path d="M266 199V228Q263 232 264 241C268 258 288 267 305 267 322 267 335 261 340 255V166H250z" fill="#fff"/>
          <g fill="none" stroke="#444" stroke-width=".9">
            <path d="M228 179L267 199Q290 211 304 221L340 244M266 199V229Q263 234 264 241C268 258 288 267 305 267 322 267 335 261 340 255M264 233C270 249 290 258 308 258 324 258 334 252 340 246M266 229C272 246 290 254 308 254 322 254 332 248 338 243"/>
            <path d="M230 180Q236 185 242 185M257 179Q258 192 265 199M260 179Q261 192 268 199M267 200C272 213 286 220 303 221M268 203C275 215 286 219 300 219M303 179C293 195 297 214 306 222M302 181C295 197 299 213 308 222M340 184C322 203 323 228 332 239M340 190C330 210 332 228 336 242"/>
          </g>
          <!-- coupling -->
          <path d="M574 291L557 281C546 274 529 284 521 301 511 319 511 337 519 341L556 362 580 361 597 337z" fill="#fff" stroke="#444" stroke-width=".9"/>
          <path d="M574 306C556 318 549 338 551 351 553 366 566 369 579 361 588 354 594 345 597 337" fill="#fff" stroke="#444" stroke-width=".9"/>
          <path d="M574 311C560 322 555 335 556 347 558 361 568 362 578 354 584 349 588 343 592 336" fill="#9cd9db" stroke="#444" stroke-width=".9"/>
          <path d="M572 166h72V318C644 331 626 338 609 338Q598 338 590 335L572 340z" fill="#9cd9db"/>
          <path d="M572.500 311V341" stroke="#9cd9db" stroke-width="3"/>
          <path d="M573 330l3 3" stroke="#444"/>
          <path d="M851.500 656V328L1007 239" fill="none" stroke="#aaa" stroke-opacity=".7" stroke-width=".8"/>
          <!-- ghost strip -->
          <g>
            <path d="M213 357h12v13h-12z" fill="url(#fadeOut)" opacity=".5"/>
            <path d="M265 357h20v13h-20z" fill="url(#fadeIn)"/>
            <path d="M328 357h20v13h-20z" fill="url(#gap)"/>
            <path d="M403 357h24v13h-24z" fill="url(#fadeOut)"/>
          </g>
          <path d="M561 378v10l2.500-2 2 4 1.500-.8-1.800-3.700h3z" fill="#fff" stroke="#444" stroke-width=".9"/>
          <!-- view cube -->
          <ellipse cx="950" cy="242" rx="38" ry="23" fill="none" stroke="#ededed" stroke-width="9"/>
          <ellipse cx="950" cy="242" rx="43" ry="27" fill="none" stroke="#bbb" stroke-width=".8" stroke-dasharray="3 1"/>
          <ellipse cx="950" cy="242" rx="33" ry="19" fill="#fff" stroke="#bbb" stroke-width=".8"/>
          <ellipse cx="950" cy="244" rx="30" ry="15" fill="url(#cubeShade)"/>
          <g stroke="#888" stroke-width=".8">
            <path d="M950 198.500L973 210 950 222 927 210z" fill="#f3f3f3"/>
            <path d="M927 210L950 222V250L927 237z" fill="#e3e3e3"/>
            <path d="M973 210L950 222V250L972 236z" fill="#ebebeb"/>
          </g>
          <g fill="#777" font-family="Liberation Sans, sans-serif" font-size="5" font-weight="bold" text-anchor="middle">
            <text transform="translate(948 213) rotate(24)">SUPERIOR</text>
            <text transform="translate(938 233) rotate(29)">FRONTAL</text>
            <text transform="translate(962 234) rotate(-27)">DIREITA</text>
            <text transform="translate(919 261) rotate(-30)" fill="#aaa" font-size="9">S</text>
            <text transform="translate(978 261) rotate(30)" fill="#aaa" font-size="9">L</text>
            <text x="923" y="225" fill="#aaa" font-size="7">O</text>
            <text x="976" y="225" fill="#aaa" font-size="7">N</text>
          </g>
          <!-- navigation bar -->
          <rect x="987" y="278" width="22" height="77" rx="3" fill="#f1f1f1" stroke="#bbb"/>
          <g fill="none" stroke="#999">
            <circle cx="998" cy="299" r="7"/><circle cx="998" cy="299" r="4"/><path d="M1001 292h4v7M989 317h17" />
            <circle cx="1004" cy="282" r="2"/><circle cx="1004" cy="351" r="2"/>
            <circle cx="999.500" cy="329" r="2.500"/><path d="M1001 331l3 2.500"/>
          </g>
          <path d="M992 322h8v7h-8z" fill="#8dbb85"/>
          <path d="M996 312h4l-2 2zM996 340h4l-2 2z" fill="#999"/>
        </svg>
        <p class="absolute left-0 top-0 h-[12px] bg-[#12eaf4] px-[3px] font-['Liberation_Sans',sans-serif] text-[9px] font-bold leading-[12px] text-[#111]">Ocultar/Isolar temporário</p>
      </div>
      <div class="flex w-[17px] flex-col items-start">
        <div class="flex w-[14px] flex-1 flex-col items-center">
          <svg class="mt-1 size-2 rotate-180"><use href="#i-chev"/></svg>
          <div class="flex-1"></div>
          <div class="h-[14px] w-3 bg-[#cdcdcd]"></div>
          <div class="flex-1"></div>
          <svg class="mb-[2px] size-2"><use href="#i-chev"/></svg>
        </div>
      </div>
    </div>
    <div class="flex h-[18px] shrink-0 items-center pb-[2px] pl-[19px]">
      <span class="w-[43px]">1 : 100</span>
      <div class="flex w-[212px] justify-between [&_svg]:size-[14px] [&>button]:flex">
        <button aria-label="Nível de detalhe"><svg><use href="#v-detail"/></svg></button>
        <button aria-label="Estilo visual"><svg><use href="#v-style"/></svg></button>
        <button aria-label="Caminho do sol"><svg><use href="#v-sun"/></svg></button>
        <button aria-label="Sombras"><svg><use href="#v-shadow"/></svg></button>
        <button aria-label="Renderização"><svg><use href="#v-render"/></svg></button>
        <button aria-label="Recortar vista"><svg><use href="#v-crop"/></svg></button>
        <button aria-label="Mostrar região"><svg><use href="#v-cropshow"/></svg></button>
        <button aria-label="Bloquear vista"><svg><use href="#v-lock"/></svg></button>
        <button aria-label="Ocultar temporário"><svg><use href="#v-hide"/></svg></button>
        <button aria-label="Revelar elementos"><svg><use href="#v-bulb"/></svg></button>
        <button aria-label="Propriedades temporárias"><svg><use href="#v-prop"/></svg></button>
        <button aria-label="Deslocamento"><svg><use href="#v-blocks"/></svg></button>
        <button aria-label="Restrições"><svg><use href="#v-constr"/></svg></button>
      </div>
      <div class="ml-[5px] flex flex-1 items-center justify-between pr-5">
        <svg class="size-2 rotate-90"><use href="#i-chev"/></svg>
        <div class="h-3 w-[14px] bg-[#cdcdcd]"></div>
        <svg class="size-2 -rotate-90"><use href="#i-chev"/></svg>
      </div>
    </div>
  </main>

  <!-- Properties -->
  <aside class="flex w-[253px] shrink-0 flex-col border-l border-[#c4c4c4] bg-[#f0f0f0]">
    <header class="flex h-[17px] shrink-0 items-center justify-between border-b border-[#dcdcdc] pl-[2px] pr-[3px]">
      <h2>Propriedades</h2>
      <button aria-label="Fechar propriedades"><svg class="size-[9px]"><use href="#i-x"/></svg></button>
    </header>
    <div class="flex h-[58px] shrink-0 items-center pl-[3px] pt-[2px]">
      <div class="flex h-[54px] w-[55px] items-center justify-center border border-[#ccc]"><svg class="size-7"><use href="#i-house"/></svg></div>
      <span class="ml-1">Vista 3D</span>
      <svg class="ml-auto mr-[2px] h-[3px] w-[6px]"><use href="#i-caret"/></svg>
    </div>
    <div class="flex h-[19px] shrink-0 items-center">
      <div class="relative h-[18px] w-[181px]">
        <select aria-label="Tipo" class="size-full appearance-none border border-[#bbb] bg-[#dedede] pl-[2px]"><option>Vista 3D: AF - 3D</option></select>
        <svg class="pointer-events-none absolute right-[3px] top-[5px] size-2"><use href="#i-chev"/></svg>
      </div>
      <button class="ml-1 flex items-center gap-[2px] whitespace-nowrap"><svg class="size-3"><use href="#i-edittype"/></svg>Editar tipo</button>
    </div>
    <div class="flex min-h-0 flex-1">
      <table class="h-[400px] w-[237px] table-fixed border-collapse bg-white text-[#2c2c2c]">
        <colgroup><col class="w-[117px]" /><col /><col class="w-[10px]" /></colgroup>
        <tbody id="props"></tbody>
      </table>
      <div class="flex flex-1 flex-col items-center">
        <svg class="mt-1 size-2 rotate-180"><use href="#i-chev"/></svg>
        <div class="mt-[104px] h-[264px] w-3 bg-[#cdcdcd]"></div>
        <svg class="mb-1 mt-auto size-2"><use href="#i-chev"/></svg>
      </div>
    </div>
    <div class="relative flex h-[26px] shrink-0 items-center justify-between pb-[2px] pl-[2px] pr-[2px]">
      <a href="#" class="text-[#2a6fc0] underline">Ajuda de propriedades</a>
      <button class="h-4 w-[67px] bg-[#cfcfcf] text-[#999]">Aplicar</button>
      <!-- channel watermark, floats over the panel -->
      <div class="pointer-events-none absolute bottom-[3px] right-3 flex flex-col items-center">
        <svg class="mr-2 size-[60px]" viewBox="-30 -30 60 60">
          <g id="wheel" stroke="#101c56"></g>
          <path d="M-2 -8v16h-3q-7-2-7-8t7-8zM0 -8h3q7 2 7 8t-7 8H0V1.500H4v-1.500H0z" fill="#b81c2b"/>
          <path d="M13 0h15" stroke="#b81c2b" stroke-width="1.500"/>
        </svg>
        <p class="whitespace-nowrap text-[25px] font-semibold leading-[34px] text-[#101c56]">cursos<span class="text-[#a8152a]">construir</span></p>
      </div>
    </div>
  </aside>
</div>

<!-- ── STATUS BAR ────────────────────────────────── -->
<div class="flex h-5 shrink-0 items-center border-t border-[#bbb] bg-[#c9c9c9] pl-[2px]">
  <p class="w-[452px]">Clique para selecionar, TAB para alternativas, CTRL adiciona, SHIFT cancela a seleção.</p>
  <svg class="size-[13px] opacity-60"><use href="#v-blocks"/></svg>
  <div class="relative ml-[5px] h-[15px] w-[170px]">
    <select aria-label="Conjunto de trabalho" class="size-full appearance-none bg-white"><option></option></select>
    <svg class="pointer-events-none absolute right-[2px] top-1 size-2 opacity-50"><use href="#i-chev"/></svg>
  </div>
  <svg class="ml-[5px] size-[13px]"><use href="#s-edit"/></svg>
  <span class="ml-1 w-6">:0</span>
  <svg class="size-[13px]"><use href="#s-opt"/></svg>
  <svg class="ml-[6px] size-[13px]"><use href="#s-opt2"/></svg>
  <div class="relative ml-[5px] h-[15px] w-[170px]">
    <select aria-label="Opção de projeto" class="size-full appearance-none bg-white pl-[2px] text-[#888]"><option>Modelo principal</option></select>
    <svg class="pointer-events-none absolute right-[2px] top-1 size-2 opacity-50"><use href="#i-chev"/></svg>
  </div>
  <div class="ml-auto mr-[46px] flex items-center gap-[7px] [&_svg]:size-[13px]">
    <button aria-label="Selecionar vínculos"><svg><use href="#s-links"/></svg></button>
    <button aria-label="Selecionar subjacentes"><svg><use href="#s-under"/></svg></button>
    <button aria-label="Selecionar fixados"><svg><use href="#s-pin"/></svg></button>
    <button aria-label="Selecionar por face"><svg><use href="#s-face"/></svg></button>
    <button aria-label="Arrastar na seleção"><svg><use href="#s-drag"/></svg></button>
    <button aria-label="Processos"><svg><use href="#s-gear"/></svg></button>
    <button class="flex items-center"><svg><use href="#s-filter"/></svg>:0</button>
  </div>
</div>

<footer class="flex h-[34px] shrink-0 items-center justify-center bg-[#0f3052] text-[17px] font-medium text-white font-[Roboto,sans-serif]">
  Revit MEP Básico: Projeto Hidrossanitário - Prof.: Isabela Ribeiro
</footer>

<!-- ── SCRIPT ───────────────────────────────────── -->
<script>
  /* project browser: one guide character per 17px indent cell
     | line   T branch   L last branch   + closed   - open */
  const tree = [
    ['-', 'Vistas (Disciplina)', 'i-views'],
    ['|+', 'Coordenação'],
    ['|-', 'Hidráulica'],
    ['| -', 'AGUA FRIA'],
    ['| |+', 'Plantas de piso'],
    ['| |-', 'Vistas 3D'],
    ['| | L', 'AF - 3D', null, true],
    ['| -', 'ESGOTO'],
    ['|  -', 'Plantas de piso'],
    ['|  |T', 'ESG - LAJE'],
    ['|  |L', 'ESG - PAV. TÉRREO'],
    ['|  -', 'Vistas 3D'],
    ['|  |L', 'ESG - 3D'],
    ['|  -', 'Cortes (Corte da construção)'],
    ['|   T', 'Corte 1'],
    ['|   L', 'Corte 2'],
    ['T', 'Legendas', 'i-legend'],
    ['-', 'Tabelas/Quantidades (todas)', 'i-sched'],
    ['|T', 'Tabela de acessório de tubo'],
    ['|L', 'Tabela de conexão de tubo'],
    ['T', 'Folhas (todas)', 'i-sheet'],
    ['+', 'Famílias', 'i-fam'],
    ['+', 'Grupos', 'i-mgroup'],
    ['+', 'Vínculos do Revit', 'i-link'],
  ];
  const line = d => `<path d="${d}" fill="none" stroke="#bbb" stroke-dasharray="2 1"/>`;
  const box = '<path d="M4.500 3.500h8v8h-8z" fill="#f6f6f6" stroke="#999"/>';
  const cells = {
    ' ': '',
    '|': line('M8.500 0v15'),
    'T': line('M8.500 0v15M8.500 7.500h10'),
    'L': line('M8.500 0v7.500h10'),
    '-': line('M8.500 0v3M13 7.500h6') + box + '<path d="M6 7.500h5" stroke="#668"/>',
    '+': line('M8.500 0v15M13 7.500h6') + box + '<path d="M6 7.500h5M8.500 5v5" stroke="#446"/>',
  };
  document.getElementById('tree').innerHTML = tree.map(([g, label, icon, on]) =>
    `<li class="flex min-h-0 flex-1 items-center whitespace-nowrap">${
      [...g].map(c => `<svg class="h-[15px] w-[17px] shrink-0 overflow-visible">${cells[c]}</svg>`).join('')
    }${icon ? `<svg class="ml-[2px] mr-1 size-[13px] shrink-0"><use href="#${icon}"/></svg>` : ''}${
      on ? `<span class="ml-[5px] bg-[#dedede] px-[2px] font-bold">${label}</span>`
         : `<span class="${icon ? '' : 'ml-[6px]'}">${label}</span>`
    }</li>`).join('');

  /* properties: [label, kind, value, disabled] */
  const props = [
    ['Sub-Disciplina', 'text', 'AGUA FRIA', true],
    ['Caminho do sol', 'check'],
    ['Extensões', 'head'],
    ['Recortar vista', 'check'],
    ['Região de recorte visí...', 'check'],
    ['Recorte de anotação', 'check'],
    ['Recorte afastado ativo', 'check'],
    ['Deslocamento do rec...', 'text', '304.8000 m', true],
    ['Caixa de escopo', 'text', 'Nenhum'],
    ['Caixa de corte', 'check'],
    ['Câmera', 'head'],
    ['Configurações de rend...', 'button', 'Editar...'],
    ['Orientação bloqueada', 'check', '', true],
    ['Modo de projeção', 'text', 'Ortogonal'],
    ['Elevação do olho', 'text', '2.9821 m'],
    ['Elevação alvo', 'text', '0.0000 m'],
    ['Posição da câmera', 'text', 'Ajustando', true],
    ['Dados de identidade', 'head'],
    ['Modelo de vista', 'button', 'CC_3D ÁGUA FRIA'],
    ['Nome da vista', 'text', 'AF - 3D'],
    ['Dependência', 'text', 'Independente', true],
    ['Título da página', 'text', ''],
    ['Fase', 'head'],
    ['Filtro da fase', 'text', 'Mostrar tudo', true],
    ['Fase', 'text', 'Construção nova'],
  ];
  document.getElementById('props').innerHTML = props.map(([label, kind, value, off], i) => {
    if (kind === 'head') return `<tr class="h-4 bg-[#dcdcdc]"><th colspan="2" class="p-0 pl-[2px] text-left font-normal leading-[15px]">${label}</th><td class="p-0"><svg class="size-[7px]"><use href="#i-up2"/></svg></td></tr>`;
    const field = {
      text: `<span>${value}</span>`,
      check: `<input id="p${i}" type="checkbox" ${off ? 'disabled' : ''} class="block size-[11px] appearance-none border ${off ? 'border-[#ccc]' : 'border-[#555]'} bg-white" />`,
      button: `<button id="p${i}" class="block h-[14px] w-full border border-[#aaa] bg-[#e1e1e1] leading-[12px]">${value}</button>`,
    }[kind];
    const name = kind === 'text' ? label : `<label for="p${i}">${label}</label>`;
    return `<tr class="h-4 border-b border-dashed border-[#bbb] ${off ? 'text-[#8a8a8a]' : ''}">
      <td class="whitespace-nowrap border-r border-dashed border-[#bbb] p-0 pl-[6px] leading-[15px]">${name}</td>
      <td class="whitespace-nowrap border-r border-dashed border-[#bbb] p-0 leading-[15px]">${field}</td><td class="p-0"></td></tr>`;
  }).join('');

  /* logo wheel: teeth thin out anticlockwise */
  let a = -44, ticks = '';
  for (let w = 6; a > -328; w = Math.max(1.2, w * 0.93)) {
    const r = a * Math.PI / 180, c = Math.cos(r), s = Math.sin(r);
    ticks += `<path d="M${c * 20} ${s * 20}L${c * 28} ${s * 28}" stroke-width="${w}"/>`;
    a -= w * 2.1 + 2.8;
  }
  document.getElementById('wheel').innerHTML = ticks;
</script>

</body>
</html>
